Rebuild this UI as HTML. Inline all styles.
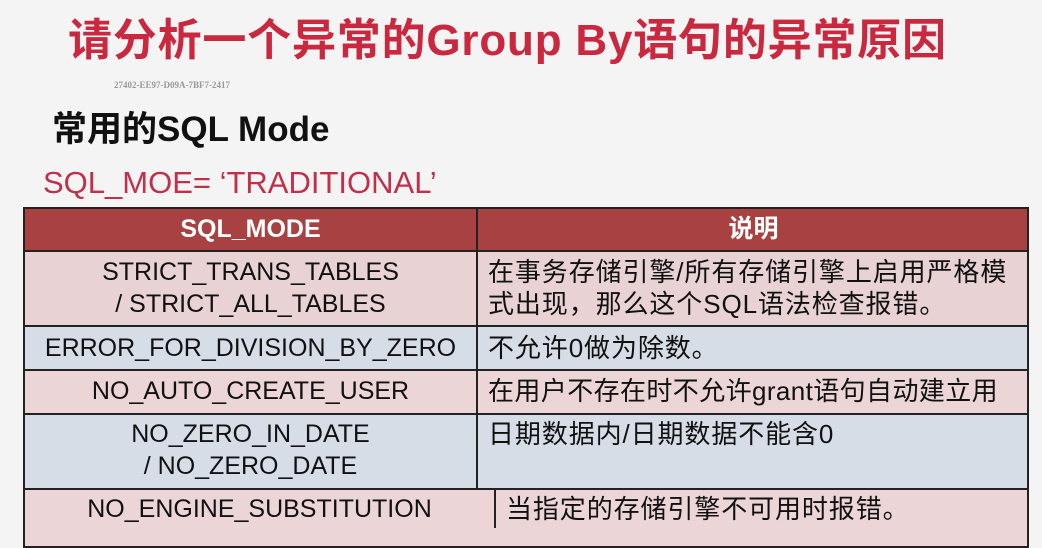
<!DOCTYPE html>
<html><head><meta charset="utf-8"><style>
body{margin:0;width:1042px;height:527px;overflow:hidden;background:#f4f4f4;font-family:"Liberation Sans","Noto Sans CJK SC",sans-serif;position:relative}
.a{position:absolute;white-space:nowrap}
.c{position:absolute;text-align:center;font-size:25px;line-height:32px;color:#111;white-space:nowrap}
.r{position:absolute;font-size:26px;line-height:32px;color:#111;white-space:nowrap;letter-spacing:0.9px}
.row{position:absolute;left:23px;width:1006px;border:2px solid #222;box-sizing:border-box}
</style></head><body>
<div class="a" style="left:68px;top:4px;font-size:44px;font-weight:bold;color:#c9283e;letter-spacing:0.8px">请分析一个异常的Group By语句的异常原因</div>
<div class="a" style="left:114px;top:80px;font-size:9px;color:#999;font-family:'Liberation Serif',serif;font-weight:bold">27402-EE97-D09A-7BF7-2417</div>
<div class="a" style="left:52px;top:101px;font-size:35px;font-weight:bold;color:#111">常用的SQL Mode</div>
<div class="a" style="left:43px;top:165px;font-size:31px;color:#c0304a">SQL_MOE= ‘TRADITIONAL’</div>

<div class="row" style="top:207px;height:45px;background:#a84242"></div>
<div class="row" style="top:250px;height:77px;background:#e8d2d3"></div>
<div class="row" style="top:325px;height:46px;background:#d6dde7"></div>
<div class="row" style="top:369px;height:46px;background:#ecd5d6"></div>
<div class="row" style="top:413px;height:77px;background:#d6dde7"></div>
<div class="row" style="top:488px;height:60px;background:#ecd5d6"></div>
<div class="a" style="left:476px;top:207px;width:2px;height:283px;background:#222"></div>
<div class="a" style="left:494px;top:488px;width:2px;height:40px;background:#222"></div>

<div class="c" style="left:25px;width:451px;top:213px;color:#fff;font-weight:bold">SQL_MODE</div>
<div class="c" style="left:478px;width:551px;top:213px;color:#fff;font-weight:bold">说明</div>

<div class="c" style="left:25px;width:451px;top:256px">STRICT_TRANS_TABLES<br>/ STRICT_ALL_TABLES</div>
<div class="r" style="left:488px;top:256px">在事务存储引擎/所有存储引擎上启用严格模<br>式出现，那么这个SQL语法检查报错。</div>
<div class="c" style="left:25px;width:451px;top:332px">ERROR_FOR_DIVISION_BY_ZERO</div>
<div class="r" style="left:488px;top:332px">不允许0做为除数。</div>
<div class="c" style="left:25px;width:451px;top:375px">NO_AUTO_CREATE_USER</div>
<div class="r" style="left:488px;top:375px;letter-spacing:0.4px">在用户不存在时不允许grant语句自动建立用</div>
<div class="c" style="left:25px;width:451px;top:418px">NO_ZERO_IN_DATE<br>/ NO_ZERO_DATE</div>
<div class="r" style="left:488px;top:418px">日期数据内/日期数据不能含0</div>
<div class="c" style="left:25px;width:469px;top:493px">NO_ENGINE_SUBSTITUTION</div>
<div class="r" style="left:506px;top:493px">当指定的存储引擎不可用时报错。</div>
</body></html>
